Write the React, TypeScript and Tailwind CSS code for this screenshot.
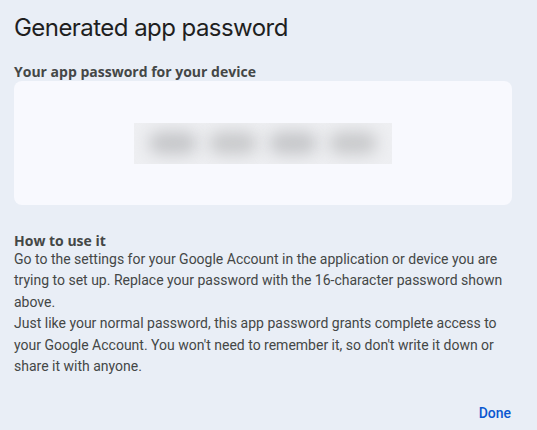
import React from "react";

export default function App() {
  return (
    <div className="w-[537px] h-[430px] bg-[#e9eef6] text-[#1f1f1f] overflow-hidden" style={{ fontFamily: "Roboto, 'Liberation Sans', sans-serif" }}>
      <div className="px-[14px] pt-[14px]">
        <h1 className="text-[24px] leading-[28px] text-[#1f1f1f] tracking-[-0.55px]" style={{ fontFamily: "Inter, 'Open Sans', sans-serif" }}>Generated app password</h1>
        <div className="mt-[21px] text-[14px] leading-[17px] font-bold text-[#444746]" style={{ fontFamily: "'Open Sans', Roboto, sans-serif" }}>Your app password for your device</div>
        <div className="mt-[1px] h-[124px] w-[498px] rounded-[8px] bg-[#f8f9fe] flex items-center justify-center">
          <div className="w-[258px] h-[41px] bg-[#eeeff2] flex items-center justify-center gap-[12px] overflow-hidden">
            <div className="w-[48px] h-[22px] rounded-full bg-[#c4c5c8] blur-[8px]" />
            <div className="w-[48px] h-[22px] rounded-full bg-[#c7c8ca] blur-[8px]" />
            <div className="w-[48px] h-[22px] rounded-full bg-[#c4c5c8] blur-[8px]" />
            <div className="w-[48px] h-[22px] rounded-full bg-[#c7c8ca] blur-[8px]" />
          </div>
        </div>
        <div className="mt-[27px] text-[14px] leading-[17px] font-bold text-[#444746]" style={{ fontFamily: "'Open Sans', Roboto, sans-serif" }}>How to use it</div>
        <p className="text-[14px] leading-[21.4px] text-[#444746] w-[500px]">
          Go to the settings for your Google Account in the application or device you are trying to set up. Replace your password with the 16-character password shown above.
          <br />
          Just like your normal password, this app password grants complete access to your Google Account. You won't need to remember it, so don't write it down or share it with anyone.
        </p>
        <div className="flex justify-end mt-[26px] pr-[12px]">
          <button className="text-[14px] font-medium text-[#0b57d0]">Done</button>
        </div>
      </div>
    </div>
  );
}
